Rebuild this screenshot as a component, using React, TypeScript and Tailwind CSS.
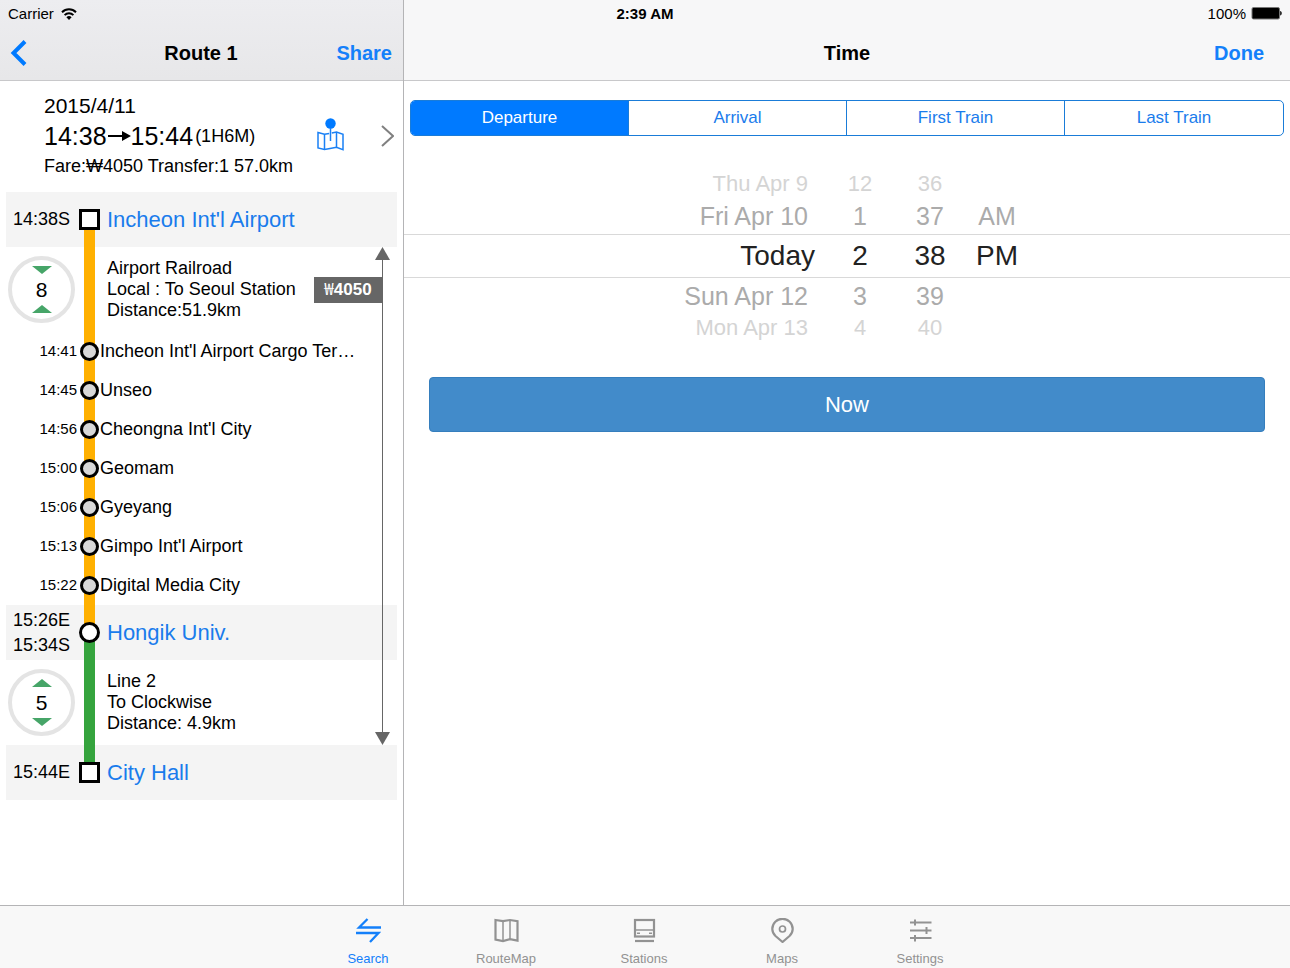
import React, { useState } from 'react';
import { clsx } from 'clsx';

type Direction = 'up' | 'down';

interface Stop {
  time: string;
  name: string;
}

const STOPS: Stop[] = [
  { time: '14:41', name: "Incheon Int'l Airport Cargo Ter…" },
  { time: '14:45', name: 'Unseo' },
  { time: '14:56', name: "Cheongna Int'l City" },
  { time: '15:00', name: 'Geomam' },
  { time: '15:06', name: 'Gyeyang' },
  { time: '15:13', name: "Gimpo Int'l Airport" },
  { time: '15:22', name: 'Digital Media City' },
];

const SEGMENTS = ['Departure', 'Arrival', 'First Train', 'Last Train'];

const PICKER_ROWS = [
  { tier: 'far', cells: ['Thu Apr 9', '12', '36', ''] },
  { tier: 'near', cells: ['Fri Apr 10', '1', '37', 'AM'] },
  { tier: 'selected', cells: ['Today', '2', '38', 'PM'] },
  { tier: 'near', cells: ['Sun Apr 12', '3', '39', ''] },
  { tier: 'far', cells: ['Mon Apr 13', '4', '40', ''] },
];

const StatusBar: React.FC = () => (
  <div className="absolute inset-x-0 top-0 grid h-[27px] grid-cols-3 items-center px-2 text-[15px] leading-[18px]">
    <div className="flex items-center gap-[7px]">
      <span>Carrier</span>
      <svg width="16" height="12" viewBox="0 0 16 12" fill="none" stroke="#000" strokeWidth="2">
        <path d="M1 4.2a10 10 0 0 1 14 0" />
        <path d="M3.6 7.1a6.3 6.3 0 0 1 8.8 0" />
        <path d="M8 12L5.4 9.2a3.8 3.8 0 0 1 5.2 0z" fill="#000" stroke="none" />
      </svg>
    </div>
    <span className="text-center font-bold">2:39 AM</span>
    <div className="flex items-center justify-end gap-[5px]">
      <span>100%</span>
      <svg width="31" height="13" viewBox="0 0 31 13">
        <rect x="1" y="0.5" width="27.5" height="11.5" rx="1.5" fill="#000" stroke="#777" />
        <path d="M29.2 4c2 .5 2 4 0 4.500z" fill="#000" />
      </svg>
    </div>
  </div>
);

const Triangle: React.FC<{ direction: Direction }> = ({ direction }) => (
  <svg width="20" height="8" viewBox="0 0 20 8" fill="#46a568">
    <path d={direction === 'up' ? 'M0 8L10 0L20 8z' : 'M0 0L10 8L20 0z'} />
  </svg>
);

interface TrackProps {
  above: string;
  below: string;
  children?: React.ReactNode;
}

const Track: React.FC<TrackProps> = ({ above, below, children }) => (
  <div className="relative flex flex-col items-center self-stretch">
    <div className={clsx('w-[11px] flex-1', above)} />
    <div className={clsx('w-[11px] flex-1', below)} />
    <div className="absolute inset-0 flex items-center justify-center">{children}</div>
  </div>
);

interface StationRowProps extends TrackProps {
  times: string[];
  name: string;
  round?: boolean;
}

const StationRow: React.FC<StationRowProps> = ({ times, name, above, below, round }) => (
  <div className="grid h-[55px] grid-cols-[73px_21px_1fr] items-center bg-[#f4f4f4]">
    <div className="pl-[7px] text-[18px] leading-[25px]">
      {times.map((time) => (
        <div key={time}>{time}</div>
      ))}
    </div>
    <Track above={above} below={below}>
      <div className={clsx('size-[21px] shrink-0 border-[3px] border-black bg-white', round && 'rounded-full')} />
    </Track>
    <a href="#" className="pl-[7px] text-[22px] leading-[25px] text-[#1a7cec]">
      {name}
    </a>
  </div>
);

interface LegRowProps {
  color: string;
  car: string;
  top: Direction;
  bottom: Direction;
  lines: string[];
  fare?: string;
}

const LegRow: React.FC<LegRowProps> = ({ color, car, top, bottom, lines, fare }) => (
  <div className="grid h-[85px] grid-cols-[73px_21px_1fr] items-center">
    <div className="ml-[2px] flex size-[67px] flex-col items-center justify-center rounded-full border-[4px] border-[#e4e4e4] bg-white">
      <Triangle direction={top} />
      <span className="text-[21px] leading-[31px]">{car}</span>
      <Triangle direction={bottom} />
    </div>
    <Track above={color} below={color} />
    <div className="flex items-center justify-between pl-[7px] pr-[15px]">
      <div className="text-[18px] leading-[21px] whitespace-nowrap">
        {lines.map((line) => (
          <div key={line}>{line}</div>
        ))}
      </div>
      {fare && (
        <span className="w-[68px] bg-[#666] text-center text-[17px] leading-[26px] font-bold text-white">
          <span className="font-['Noto_Sans_CJK_KR',sans-serif] leading-none font-normal">₩</span>
          {fare}
        </span>
      )}
    </div>
  </div>
);

const RoutePanel: React.FC = () => (
  <section className="flex w-[404px] shrink-0 flex-col border-r border-[#b4b4b6]">
    <header className="grid h-[81px] grid-cols-[1fr_auto_1fr] items-center border-b border-[#c8c8ca] bg-linear-to-b from-[#ededf0] to-[#e7e7e9] pt-[26px] pr-[11px] pl-[10px]">
      <button type="button" aria-label="Back" className="justify-self-start">
        <svg width="17" height="26" viewBox="0 0 17 26" fill="none" stroke="#007aff" strokeWidth="4">
          <path d="M15 1.500L3.500 13L15 24.500" />
        </svg>
      </button>
      <h1 className="text-[20px] font-bold">Route 1</h1>
      <button type="button" className="justify-self-end text-[20px] font-bold text-[#1480fa]">
        Share
      </button>
    </header>

    {/* Trip summary */}
    <div className="flex items-center pt-[10px] pr-[9px] pb-[11px] pl-[44px]">
      <div className="flex-1">
        <div className="text-[21px] leading-[30px]">2015/4/11</div>
        <div className="flex items-center text-[25px] leading-[30px]">
          <span>14:38</span>
          <svg width="24" height="12" viewBox="0 0 24 12">
            <path d="M1 5H15V1L24 6L15 11V7H1z" />
          </svg>
          <span>15:44</span>
          <span className="pl-[2px] text-[18px]">(1H6M)</span>
        </div>
        <div className="text-[18px] leading-[30px]">Fare:₩4050 Transfer:1 57.0km</div>
      </div>
      <button type="button" aria-label="Show on map">
        <svg width="27" height="36" viewBox="0 0 27 36" fill="none" stroke="#1a80f5" strokeWidth="1.5">
          <circle cx="13.5" cy="5.5" r="5.2" fill="#007aff" stroke="none" />
          <path d="M13.500 10V23" />
          <path d="M12.200 15.500L7.500 16.200L1 14.500V30L7.500 31.600L13 30.500L19.500 29.300L26 31.600V16.200L19.500 14L14.800 15" />
          <path d="M7.500 16.200V31.600M19.500 14V29.300" />
        </svg>
      </button>
      <svg className="ml-[37px]" width="13" height="22" viewBox="0 0 13 22" fill="none" stroke="#808080" strokeWidth="2">
        <path d="M1 1L12 11L1 21" />
      </svg>
    </div>

    {/* Timeline */}
    <div className="relative mx-[6px]">
      <StationRow times={['14:38S']} name="Incheon Int'l Airport" above="bg-transparent" below="bg-[#ffb000]" />
      <LegRow
        color="bg-[#ffb000]"
        car="8"
        top="down"
        bottom="up"
        lines={['Airport Railroad', 'Local : To Seoul Station', 'Distance:51.9km']}
        fare="4050"
      />
      <ul>
        {STOPS.map((stop) => (
          <li key={stop.time} className="grid h-[39px] grid-cols-[73px_21px_1fr] items-center">
            <span className="pr-[2px] text-right text-[15px]">{stop.time}</span>
            <Track above="bg-[#ffb000]" below="bg-[#ffb000]">
              <div className="size-[19px] shrink-0 rounded-full border-[3px] border-black bg-[#d8d8d8]" />
            </Track>
            <span className="text-[18px] whitespace-nowrap">{stop.name}</span>
          </li>
        ))}
      </ul>
      <StationRow
        times={['15:26E', '15:34S']}
        name="Hongik Univ."
        above="bg-[#ffb000]"
        below="bg-[#35a43d]"
        round
      />
      <LegRow
        color="bg-[#35a43d]"
        car="5"
        top="up"
        bottom="down"
        lines={['Line 2', 'To Clockwise', 'Distance: 4.9km']}
      />
      <StationRow times={['15:44E']} name="City Hall" above="bg-[#35a43d]" below="bg-transparent" />

      {/* Fare range arrow */}
      <div className="absolute top-[55px] right-[7px] bottom-[55px] flex flex-col items-center">
        <svg width="15" height="13" viewBox="0 0 15 13" fill="#666">
          <path d="M0 13L7.500 0L15 13z" />
        </svg>
        <div className="w-px flex-1 bg-[#666]" />
        <svg width="15" height="13" viewBox="0 0 15 13" fill="#666">
          <path d="M0 0L7.500 13L15 0z" />
        </svg>
      </div>
    </div>
  </section>
);

const TimePanel: React.FC = () => {
  const [segment, setSegment] = useState(0);

  return (
    <section className="flex min-w-0 flex-1 flex-col">
      <header className="grid h-[81px] grid-cols-[1fr_auto_1fr] items-center border-b border-[#c8c8ca] bg-[#f7f7f8] px-[26px] pt-[26px]">
        <h1 className="col-start-2 text-[20px] font-bold">Time</h1>
        <button type="button" className="justify-self-end text-[20px] font-bold text-[#1480fa]">
          Done
        </button>
      </header>

      <div className="mx-[6px] mt-[19px] grid h-[36px] grid-cols-4 divide-x divide-[#1a7cd8] overflow-hidden rounded-[5px] border border-[#1a7cd8]">
        {SEGMENTS.map((label, index) => (
          <button
            key={label}
            type="button"
            aria-pressed={segment === index}
            onClick={() => setSegment(index)}
            className={clsx('text-[17px]', segment === index ? 'bg-[#007aff] text-white' : 'text-[#1a7cec]')}
          >
            {label}
          </button>
        ))}
      </div>

      {/* Date wheel */}
      <div className="mt-[34px]">
        {PICKER_ROWS.map(({ tier, cells }) => (
          <div
            key={cells[0]}
            className={clsx(
              'grid grid-cols-[160px_90px_50px_84px] items-center justify-center text-center',
              tier === 'far' && 'h-[28px] text-[22px] leading-[28px] text-[#d4d4d4]',
              tier === 'near' && 'h-[36px] text-[25px] leading-[36px] text-[#ababab]',
              tier === 'selected' && 'h-[44px] border-y border-[#d9d9d9] text-[28px] leading-[42px] text-[#222]'
            )}
          >
            <span className={clsx('text-right', tier !== 'selected' && 'pr-[7px]')}>{cells[0]}</span>
            <span>{cells[1]}</span>
            <span>{cells[2]}</span>
            <span>{cells[3]}</span>
          </div>
        ))}
      </div>

      <button
        type="button"
        className="mx-[25px] mt-[35px] h-[55px] rounded-[4px] border border-[#357ebd] bg-[#428bca] text-[22px] text-white"
      >
        Now
      </button>
    </section>
  );
};

const TABS = [
  {
    label: 'Search',
    icon: (
      <g strokeWidth="2.3">
        <path d="M25 9.500H3L11.500 1" />
        <path d="M0 15H22.500L14 24" />
      </g>
    ),
  },
  {
    label: 'RouteMap',
    icon: (
      <g strokeWidth="2.2">
        <path d="M1.500 2L9 3.200L16 2L23.500 3.200V22.600L16 21.200L9 23L1.500 21.600z" />
        <path d="M9 3V23M16 2V21" strokeWidth="1.5" />
      </g>
    ),
  },
  {
    label: 'Stations',
    icon: (
      <g strokeWidth="2.2">
        <rect x="3" y="2" width="19" height="16.500" />
        <path d="M3 23H22" />
        <path d="M3 12H22M5 15.300H8M17 15.300H20" strokeWidth="1.400" />
      </g>
    ),
  },
  {
    label: 'Maps',
    icon: (
      <g strokeWidth="2.2">
        <path d="M12.500 24L5.500 18C3.400 16 2.300 13.600 2.300 11a10.200 10.200 0 0 1 20.400 0c0 2.600-1.100 5-3.200 7z" />
        <circle cx="12.500" cy="11" r="3" strokeWidth="1.700" />
      </g>
    ),
  },
  {
    label: 'Settings',
    icon: (
      <g strokeWidth="2.2">
        <path d="M2 4.500H23.500M2 12.500H23.500M2 20H23.500" />
        <path d="M7 1.500V7.500M18.500 9V16M7 17V23.500" strokeWidth="2" />
      </g>
    ),
  },
];

const TabBar: React.FC = () => {
  const [active, setActive] = useState('Search');

  return (
    <nav className="flex justify-center border-t border-[#b4b4b6] bg-[#f8f8f8] pr-[2px]">
      {TABS.map(({ label, icon }) => (
        <button
          key={label}
          type="button"
          onClick={() => setActive(label)}
          className={clsx(
            'flex w-[138px] flex-col items-center pt-[12px] pb-px',
            active === label ? 'text-[#1480fa]' : 'text-[#929292]'
          )}
        >
          <svg width="25" height="25" viewBox="0 0 25 25" fill="none" stroke="currentColor">
            {icon}
          </svg>
          <span className="mt-[8px] text-[13px] leading-[16px]">{label}</span>
        </button>
      ))}
    </nav>
  );
};

export default function App() {
  return (
    <div className="relative flex min-h-screen flex-col bg-white font-['Liberation_Sans',Arial,sans-serif] text-black">
      <main className="flex flex-1">
        <RoutePanel />
        <TimePanel />
      </main>
      <TabBar />
      <StatusBar />
    </div>
  );
}
